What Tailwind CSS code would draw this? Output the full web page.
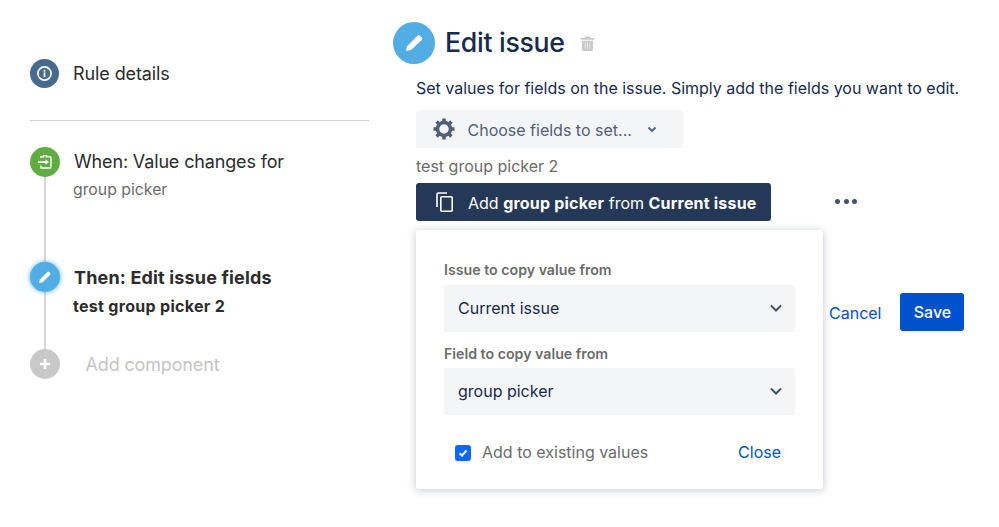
<!DOCTYPE html>
<html><head><meta charset="utf-8">
<script src="https://cdn.jsdelivr.net/npm/@tailwindcss/browser@4"></script>
</head>
<body class="bg-white">
<div class="w-[999px] h-[527px] overflow-hidden flex font-['Inter','Liberation_Sans',sans-serif] text-[#172b4d]">
  <aside class="w-[393px] shrink-0 pl-[30px] pt-[59px]">
    <div class="w-[339px]">
      <div class="flex items-center h-[29px]">
        <span class="w-[29px] h-[29px] rounded-full bg-[#476a8f] flex items-center justify-center shrink-0">
          <svg width="17" height="17" viewBox="0 0 17 17" fill="none"><circle cx="8.500" cy="8.500" r="6.600" stroke="#fff" stroke-width="1.700"/><rect x="7.600" y="7.400" width="1.800" height="4.600" fill="#fff"/><rect x="7.600" y="4.800" width="1.800" height="1.800" fill="#fff"/></svg>
        </span>
        <span class="ml-[14px] mt-[1px] text-[18px] leading-[24px] text-[#2c2c2c] tracking-[-0.1px]">Rule details</span>
      </div>
      <div class="h-px bg-[#cfcfcf] mt-[32px]"></div>
      <div class="mt-[26px] relative">
        <div class="absolute left-[14px] top-[20px] w-[2px] bg-[#d6d6d6] h-[200px]"></div>
        <div class="relative flex h-[115px]">
          <span class="w-[30px] h-[30px] rounded-full bg-[#5fad41] flex items-center justify-center shrink-0">
            <svg width="18" height="18" viewBox="0 0 18 18" fill="none"><path d="M5 5V3.800h2.500V2.600h3V3.800H14a1 1 0 0 1 1 1V14a1 1 0 0 1-1 1H5V12.500" stroke="#fff" stroke-width="1.400"/><path d="M2 8.200h7.500V6.200L13 9l-3.500 2.800V10H2z" fill="#fff"/></svg>
          </span>
          <div class="ml-[14px]">
            <div class="text-[18px] leading-[30px] text-[#2c2c2c] tracking-[-0.15px]">When: Value changes for</div>
            <div class="text-[15.800px] leading-[28px] text-[#6b6b6b] -ml-px -mt-[1px]">group picker</div>
          </div>
        </div>
        <div class="relative flex h-[87px]">
          <span class="w-[30px] h-[30px] rounded-full bg-[#52ade4] flex items-center justify-center shrink-0 shadow-[0_0_5px_#52ade4]">
            <svg width="18" height="18" viewBox="0 0 18 18"><path d="M3 15l.8-3.600 7.500-7.500a1.300 1.300 0 0 1 1.800 0l1 1a1.300 1.300 0 0 1 0 1.800L6.600 14.200z" fill="#fff"/></svg>
          </span>
          <div class="ml-[14px]">
            <div class="text-[18px] leading-[31px] font-bold text-[#2c2c2c] tracking-[0.17px]">Then: Edit issue fields</div>
            <div class="text-[16px] leading-[27px] font-bold text-[#2c2c2c] -ml-px tracking-[0.3px]">test group picker 2</div>
          </div>
        </div>
        <div class="relative flex items-center h-[30px]">
          <span class="w-[30px] h-[30px] rounded-full bg-[#c9c9c9] flex items-center justify-center shrink-0">
            <svg width="14" height="14" viewBox="0 0 14 14"><path d="M5.700 2h2.600v3.700H12v2.600H8.300V12H5.700V8.300H2V5.700h3.700z" fill="#fff"/></svg>
          </span>
          <span class="ml-[25.500px] text-[18px] text-[#c4c4c4] tracking-[-0.15px]">Add component</span>
        </div>
      </div>
    </div>
  </aside>
  <main class="flex-1 pt-[22px]">
    <div class="flex items-center h-[41px]">
      <span class="w-[42px] h-[42px] rounded-full bg-[#52ade4] flex items-center justify-center shrink-0">
        <svg width="24" height="24" viewBox="0 0 24 24"><path d="M4 20l1-4.800 10.500-10.500a1.800 1.800 0 0 1 2.500 0l1.800 1.800a1.800 1.800 0 0 1 0 2.500L9 19z" fill="#fff"/></svg>
      </span>
      <h1 class="ml-[10px] -mt-[2px] text-[26.700px] font-medium leading-[40px] tracking-[-0.3px] text-[#172b4d]">Edit issue</h1>
      <svg class="ml-[15px] mt-[2px]" width="15" height="17" viewBox="0 0 16 18"><path d="M5 1.500h6V3h4v2H1V3h4zM2.200 6h11.600v9.500a1.500 1.500 0 0 1-1.500 1.500H3.700a1.500 1.500 0 0 1-1.500-1.500z" fill="#c8c8c8"/><path d="M5.500 8v7M8 8v7M10.500 8v7" stroke="#e8e8e8" stroke-width="1"/></svg>
    </div>
    <div class="pl-[23px]">
      <p class="mt-[13px] text-[16px] leading-[24px] whitespace-nowrap text-[#172b4d]">Set values for fields on the issue. Simply add the fields you want to edit.</p>
      <button class="mt-[10px] w-[267px] h-[38px] rounded-[3px] bg-[#f4f5f7] flex items-center pl-[16px] text-[#505f79]">
        <svg width="24" height="24" viewBox="0 0 24 24" fill="none"><circle cx="12" cy="12" r="6.500" stroke="#505f79" stroke-width="3.500"/><path d="M12 1.500v4M12 18.500v4M1.500 12h4M18.500 12h4M4.600 4.600l2.800 2.800M16.600 16.600l2.800 2.800M4.600 19.400l2.800-2.800M16.600 7.400l2.800-2.800" stroke="#505f79" stroke-width="3.500"/></svg>
        <span class="ml-[11.500px] text-[16px] leading-[24px] mt-[1px]">Choose fields to set...</span>
        <svg class="ml-[14px]" width="12" height="12" viewBox="0 0 12 12" fill="none"><path d="M2.500 4.500L6 8l3.500-3.500" stroke="#505f79" stroke-width="1.800"/></svg>
      </button>
      <div class="mt-[6px] text-[16px] leading-[24px] text-[#6b6b6b]">test group picker 2</div>
      <div class="mt-[5px] flex items-center">
        <button class="w-[355px] h-[38px] rounded-[3px] bg-[#253858] flex items-center pl-[19px] text-white">
          <svg width="20" height="22" viewBox="0 0 20 22" fill="none"><path d="M2 16V3.500A1.500 1.500 0 0 1 3.500 2H12" stroke="#fff" stroke-width="1.600"/><rect x="5.800" y="5.800" width="11.400" height="14.400" rx="1" stroke="#fff" stroke-width="1.600"/></svg>
          <span class="ml-[13px] text-[16px] leading-[24px] mt-[1px] whitespace-nowrap">Add <b class="font-bold tracking-[0.2px]">group picker</b> from <b class="font-bold tracking-[0.2px]">Current issue</b></span>
        </button>
        <span class="ml-[64px] flex gap-[3.500px] -mt-[2px]">
          <i class="w-[5px] h-[5px] rounded-full bg-[#42526e]"></i><i class="w-[5px] h-[5px] rounded-full bg-[#42526e]"></i><i class="w-[5px] h-[5px] rounded-full bg-[#42526e]"></i>
        </span>
      </div>
      <div class="mt-[9px] flex items-start">
        <section class="w-[407px] h-[259px] bg-white rounded-[3px] shadow-[0_1px_8px_rgba(9,30,66,0.25)] px-[28px] pt-[31px] shrink-0">
          <label class="block text-[14.200px] leading-[18px] font-semibold text-[#6b6b6b]">Issue to copy value from</label>
          <div class="mt-[6px] h-[47px] rounded-[3px] bg-[#f4f5f7] flex items-center justify-between pl-[14px] pr-[12px] text-[16px] text-[#172b4d]">
            <span class="-mt-[2px]">Current issue</span>
            <svg class="-mt-[2px]" width="14" height="14" viewBox="0 0 14 14" fill="none"><path d="M2 4.500L7 9.500l5-5" stroke="#42526e" stroke-width="2"/></svg>
          </div>
          <label class="block mt-[13px] text-[14.200px] leading-[18px] font-semibold text-[#6b6b6b]">Field to copy value from</label>
          <div class="mt-[5px] h-[47px] rounded-[3px] bg-[#f4f5f7] flex items-center justify-between pl-[14px] pr-[12px] text-[16px] text-[#172b4d]">
            <span class="-mt-[2px]">group picker</span>
            <svg class="-mt-[2px]" width="14" height="14" viewBox="0 0 14 14" fill="none"><path d="M2 4.500L7 9.500l5-5" stroke="#42526e" stroke-width="2"/></svg>
          </div>
          <div class="mt-[26px] pl-[11px] pr-[14px] flex items-center h-[24px]">
            <span class="w-[16px] h-[16px] rounded-[3px] bg-[#0c66ff] flex items-center justify-center shrink-0">
              <svg width="12" height="12" viewBox="0 0 12 12" fill="none"><path d="M2.500 6.200L5 8.500l4.500-5" stroke="#fff" stroke-width="2"/></svg>
            </span>
            <span class="ml-[11px] -mt-[2px] text-[16px] text-[#6b6b6b]">Add to existing values</span>
            <span class="ml-auto -mt-[2px] text-[16px] text-[#0052cc]">Close</span>
          </div>
        </section>
        <div class="ml-[6px] mt-[63px] flex items-center">
          <a class="mt-[2px] text-[16px] text-[#0052cc]">Cancel</a>
          <button class="ml-[19px] w-[64px] h-[38px] rounded-[3px] bg-[#0052cc] text-white text-[16px] font-medium">Save</button>
        </div>
      </div>
    </div>
  </main>
</div>
</body></html>
